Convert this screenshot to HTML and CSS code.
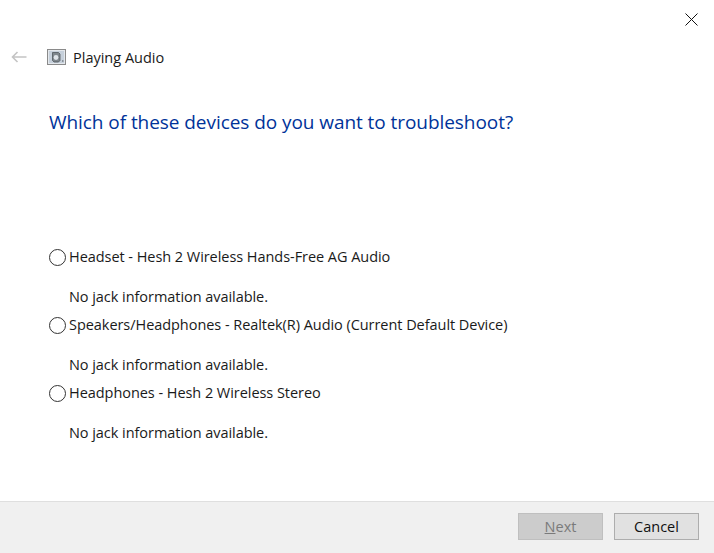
FILE: index.html
```html
<!DOCTYPE html>
<html lang="en">
<head>
<meta charset="utf-8">
<title>Playing Audio</title>
<link rel="stylesheet" href="styles.css">
</head>
<body>
<div class="dialog">
  <div class="titlebar">
    <svg class="close" width="13" height="13" viewBox="0 0 13 13"><path d="M.5.5l12 12M12.5.5l-12 12" stroke="#111" fill="none"/></svg>
  </div>
  <div class="nav">
    <svg class="back" width="16" height="12" viewBox="0 0 16 12"><path d="M15.500 6H1.500M6.500 1l-5 5 5 5" stroke="#c4c4c4" stroke-width="1.600" fill="none"/></svg>
    <svg class="app-icon" width="20" height="17" viewBox="0 0 20 17">
      <rect x=".5" y=".5" width="18" height="15" fill="#e4e8ec" stroke="#8a8a8a"/>
      <rect x="2" y="2" width="15" height="12" fill="#c6d0db"/>
      <path d="M5.500 3.500h6l1.500 1.500v6.500l-1.500 1.500H7l-1.500-1.500z" fill="#7f878d" stroke="#50575c" stroke-width=".8"/>
      <circle cx="9" cy="8.500" r="2.400" fill="#dfe4e9"/>
      <rect x="15" y="11" width="1.500" height="2" fill="#8a929a"/>
    </svg>
    <span class="nav-title">Playing Audio</span>
  </div>
  <main class="content">
    <h1 class="heading">Which of these devices do you want to troubleshoot?</h1>
    <ul class="devices">
      <li class="device">
        <label class="device-name"><span class="radio"></span>Headset - Hesh 2 Wireless Hands-Free AG Audio</label>
        <p class="device-info">No jack information available.</p>
      </li>
      <li class="device">
        <label class="device-name"><span class="radio"></span>Speakers/Headphones - Realtek(R) Audio (Current Default Device)</label>
        <p class="device-info">No jack information available.</p>
      </li>
      <li class="device">
        <label class="device-name"><span class="radio"></span>Headphones - Hesh 2 Wireless Stereo</label>
        <p class="device-info">No jack information available.</p>
      </li>
    </ul>
  </main>
  <footer class="footer">
    <button class="btn btn-disabled" disabled><span class="accel">N</span>ext</button>
    <button class="btn">Cancel</button>
  </footer>
</div>
</body>
</html>
```
FILE: styles.css
```css
* { box-sizing: border-box; }
html, body { margin: 0; padding: 0; background: #fff; }
body {
  font-family: "Open Sans", "Noto Sans", "Liberation Sans", sans-serif;
  font-size: 14.5px;
  color: #1a1a1a;
}
.dialog {
  width: 714px;
  height: 553px;
  display: flex;
  flex-direction: column;
  overflow: hidden;
}
.titlebar {
  height: 45px;
  padding: 13px 16px 0 0;
  display: flex;
  justify-content: flex-end;
  align-items: flex-start;
  flex: none;
}
.nav {
  height: 24px;
  display: flex;
  align-items: center;
  padding-left: 11px;
  flex: none;
}
.back { margin-right: 20px; }
.app-icon { margin-right: 6px; }
.nav-title { font-size: 14.5px; }
.content { flex: 1; padding: 0 0 0 49px; }
.heading {
  margin: 39px 0 0;
  font-size: 19px;
  line-height: 28px;
  font-weight: 400;
  color: #003399;
  letter-spacing: -.06px;
}
.devices {
  list-style: none;
  padding: 0;
  margin: 108px 0 0;
}
.device { height: 68px; }
.device-name {
  display: flex;
  align-items: center;
  height: 24px;
  letter-spacing: -.05px;
}
.radio {
  width: 17px;
  height: 17px;
  border: 1px solid #333;
  border-radius: 50%;
  margin: 2px 3px 0 0;
  flex: none;
  background: #fff;
}
.device-info {
  margin: 17px 0 0 20px;
  line-height: 24px;
  letter-spacing: -.05px;
}
.footer {
  height: 52px;
  flex: none;
  background: #f0f0f0;
  border-top: 1px solid #dfdfdf;
  display: flex;
  justify-content: flex-end;
  gap: 11px;
  padding: 11px 15px 0 0;
}
.btn {
  width: 85px;
  height: 27px;
  padding: 0;
  font: inherit;
  color: #111;
  background: #e1e1e1;
  border: 1px solid #adadad;
}
.btn-disabled {
  background: #cccccc;
  border-color: #bfbfbf;
  color: #7a7a7a;
}
.accel { text-decoration: underline; }
```
